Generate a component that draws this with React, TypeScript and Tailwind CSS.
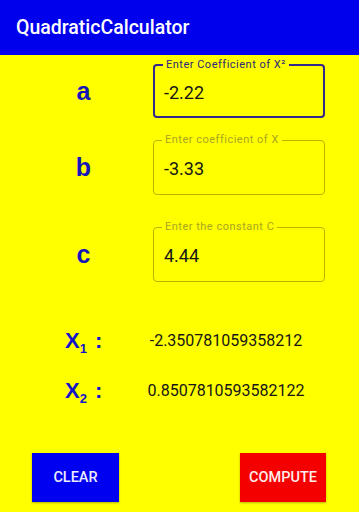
import React from "react";

function Field({ label, value, active }: { label: string; value: string; active?: boolean }) {
  return (
    <div
      className={
        active
          ? "relative w-[172px] h-[54px] rounded-[4px] border-2 border-[#34288a] flex items-center pl-[9px]"
          : "relative w-[172px] h-[55px] rounded-[4px] border border-[#b8b400] flex items-center pl-[10px]"
      }
    >
      <span
        className={
          active
            ? "absolute left-[8px] top-[-8px] px-[3px] bg-[#ffff00] text-[11px] tracking-[0.5px] leading-[13px] text-[#2e2a78]"
            : "absolute left-[8px] top-[-8px] px-[3px] bg-[#ffff00] text-[11px] tracking-[0.5px] leading-[13px] text-[#aaa620]"
        }
      >
        {label}
      </span>
      <span className="text-[18px] text-[#161616] mt-[2px]">{value}</span>
    </div>
  );
}

function Row({ letter, children, className }: { letter: string; children: React.ReactNode; className: string }) {
  return (
    <div className={"flex items-center " + className}>
      <div className="w-[153px] flex justify-center pl-[14px]">
        <span className="text-[25px] font-bold text-[#1515b8] leading-none" style={{ fontFamily: '"Liberation Sans", Arial, sans-serif' }}>
          {letter}
        </span>
      </div>
      {children}
    </div>
  );
}

function Result({ n, value, className }: { n: string; value: string; className: string }) {
  return (
    <div className={"flex items-center h-[30px] " + className}>
      <div className="w-[130px] pl-[65px] flex items-baseline text-[#1515c8] font-bold" style={{ fontFamily: '"Liberation Sans", Arial, sans-serif' }}>
        <span className="text-[22px] leading-none">X</span>
        <span className="text-[13px] leading-none relative top-[5px]">{n}</span>
        <span className="text-[22px] leading-none ml-[8px]">:</span>
      </div>
      <div className="w-[192px] flex justify-center">
        <span className="text-[16px] text-[#151515] whitespace-nowrap">{value}</span>
      </div>
    </div>
  );
}

export default function App() {
  return (
    <div className="w-[359px] h-[512px] bg-[#ffff00] flex flex-col overflow-hidden" style={{ fontFamily: 'Roboto, "Noto Sans", sans-serif' }}>
      <div className="h-[55px] bg-[#0000ec] flex items-center pl-[16px] shrink-0">
        <span className="text-white text-[19.5px] font-medium">QuadraticCalculator</span>
      </div>
      <Row letter="a" className="mt-[9px]">
        <Field label="Enter Coefficient of X²" value="-2.22" active />
      </Row>
      <Row letter="b" className="mt-[22px]">
        <Field label="Enter coefficient of X" value="-3.33" />
      </Row>
      <Row letter="c" className="mt-[32px]">
        <Field label="Enter the constant C" value="4.44" />
      </Row>
      <Result n="1" value="-2.350781059358212" className="mt-[44px]" />
      <Result n="2" value="0.8507810593582122" className="mt-[20px]" />
      <div className="flex-1" />
      <div className="flex justify-between pl-[32px] pr-[33px] mb-[10px]">
        <button className="w-[87px] h-[49px] bg-[#0000f0] text-[#ececff] text-[14.5px] font-medium shadow-[0_1px_2px_rgba(0,0,0,0.3)]">CLEAR</button>
        <button className="w-[86px] h-[49px] bg-[#f50000] text-[#ffecec] text-[14.5px] font-medium shadow-[0_1px_2px_rgba(0,0,0,0.3)]">COMPUTE</button>
      </div>
    </div>
  );
}
